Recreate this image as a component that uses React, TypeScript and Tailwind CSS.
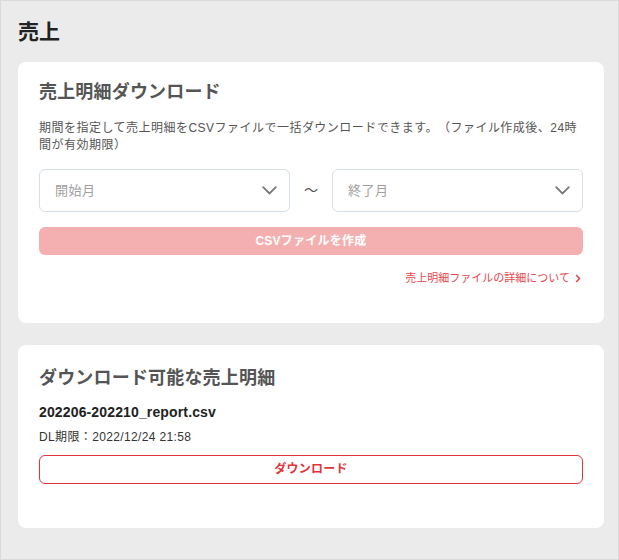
import React from 'react';

function Chevron() {
  return (
    <svg width="15" height="9" viewBox="0 0 15 9" fill="none">
      <path d="M1.2 1.2 L7.5 7.5 L13.8 1.2" stroke="#7a7a7a" strokeWidth="1.8" strokeLinecap="round" strokeLinejoin="round" />
    </svg>
  );
}

function MonthSelect({ placeholder }: { placeholder: string }) {
  return (
    <div className="flex-1 h-[43px] rounded-md border border-[#d6dee8] bg-white flex items-center justify-between pl-[15px] pr-[12px]">
      <span className="text-[13px] text-[#a0a0a0] tracking-[0.04em]">{placeholder}</span>
      <Chevron />
    </div>
  );
}

export default function App() {
  return (
    <div
      className="w-[619px] h-[560px] border border-[#dadada] bg-[#ebebeb] pl-[17px] pr-[14px] pt-[14px] [text-spacing-trim:space-all]"
      style={{ fontFamily: '"Liberation Sans", "Noto Sans CJK JP", sans-serif' }}
    >
      <h1 className="text-[21px] font-bold text-[#222] leading-[33px]">売上</h1>

      <section className="mt-[14px] bg-white rounded-lg px-[21px] pt-[16px] pb-[36px]">
        <h2 className="text-[18px] font-bold text-[#555] leading-[28px] tracking-[0.01em]">売上明細ダウンロード</h2>
        <p className="mt-[14px] text-[12px] leading-[17px] text-[#555] tracking-[0.04em]">
          期間を指定して売上明細をCSVファイルで一括ダウンロードできます。（ファイル作成後、24時間が有効期限）
        </p>
        <div className="mt-[15px] flex items-center">
          <MonthSelect placeholder="開始月" />
          <span className="w-[42px] text-center text-[14px] text-[#555]">〜</span>
          <MonthSelect placeholder="終了月" />
        </div>
        <button
          type="button"
          className="mt-[15px] w-full h-[28px] rounded-md bg-[#f4b0b0] text-white text-[12px] font-bold tracking-[0.02em]"
        >
          CSVファイルを作成
        </button>
        <div className="mt-[15px] flex justify-end items-center gap-[5px] pr-[2px] text-[11px] text-[#e5484d]">
          <span>売上明細ファイルの詳細について</span>
          <svg width="6" height="9" viewBox="0 0 6 9" fill="none">
            <path d="M1.2 1 L4.5 4.5 L1.2 8" stroke="#e5484d" strokeWidth="1.6" />
          </svg>
        </div>
      </section>

      <section className="mt-[22px] bg-white rounded-lg px-[21px] pt-[19px] pb-[44px]">
        <h2 className="text-[18px] font-bold text-[#555] leading-[28px] tracking-[0.01em]">ダウンロード可能な売上明細</h2>
        <p className="mt-[10px] text-[14px] font-bold text-[#222] leading-[20px] tracking-[0.01em]">202206-202210_report.csv</p>
        <p className="mt-[7px] text-[12px] text-[#333] leading-[17px] tracking-[0.03em]">DL期限：2022/12/24 21:58</p>
        <button
          type="button"
          className="mt-[9px] w-full h-[29px] rounded-md border border-[#e0343a] bg-white text-[#e0343a] text-[12px] font-bold tracking-[0.02em]"
        >
          ダウンロード
        </button>
      </section>
    </div>
  );
}
